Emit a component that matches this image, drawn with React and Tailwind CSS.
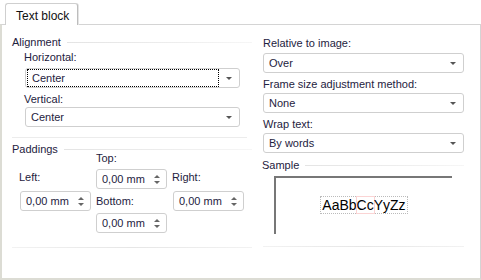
import React from 'react';

const font = { fontFamily: '"Liberation Sans", Arial, sans-serif' };

function Label({ children, className = '' }) {
  return <div className={`h-[14px] leading-[14px] text-[11px] text-[#1e2240] whitespace-nowrap ${className}`}>{children}</div>;
}

function GroupTitle({ title, className = '' }) {
  return (
    <div className={`flex items-center gap-[6px] ${className}`}>
      <Label>{title}</Label>
      <div className="flex-1 h-px bg-gradient-to-r from-[#e4e4e4] via-[#ececec] to-[#f6f6f6]" />
    </div>
  );
}

function Select({ value, focused, className = '' }) {
  return (
    <div className={`h-[20px] border border-[#cfcfcf] rounded-[3px] bg-white flex items-center ${className}`}>
      <div className={`flex-1 h-[18px] flex items-center pl-[4px] text-[11px] text-[#1e2240] ${focused ? 'border border-dotted border-black ml-px' : 'pl-[5px]'}`}>
        {value}
      </div>
      <div className="w-[20px] flex justify-center">
        <div className="w-0 h-0 border-l-[3px] border-r-[3px] border-t-[3px] border-l-transparent border-r-transparent border-t-[#555]" />
      </div>
    </div>
  );
}

function Spin({ value, className = '' }) {
  return (
    <div className={`w-[71px] h-[20px] border border-[#cfcfcf] rounded-[3px] bg-white flex items-center ${className}`}>
      <div className="flex-1 pl-[5px] text-[11px] text-[#1e2240] whitespace-nowrap">{value}</div>
      <div className="w-[18px] flex flex-col items-center gap-[3px]">
        <div className="w-0 h-0 border-l-[3px] border-r-[3px] border-b-[3px] border-l-transparent border-r-transparent border-b-[#666]" />
        <div className="w-0 h-0 border-l-[3px] border-r-[3px] border-t-[3px] border-l-transparent border-r-transparent border-t-[#666]" />
      </div>
    </div>
  );
}

export default function App() {
  return (
    <div className="w-[481px] h-[280px] bg-white flex flex-col" style={font}>
      {/* Tab strip */}
      <div className="h-[24px] flex items-end pl-[5px] relative">
        <div className="w-[73px] h-[22px] border border-b-0 border-[#cfcfcf] border-r-[#bdbdbd] rounded-t-[3px] bg-white text-[12px] text-[#111] pl-[10px] pt-[3px] relative z-10 -mb-px shadow-[1px_0_0_#e4e4e4]">
          Text block
        </div>
      </div>

      {/* Panel */}
      <div className="flex-1 border border-[#d4d4d4] border-l-[2px] border-l-[#dcdcd4] border-b-[2px] border-b-[#dcdcd4] flex">
        {/* Left column */}
        <div className="w-[250px] pl-[10px] flex flex-col">
          <GroupTitle title="Alignment" className="mt-[10px]" />
          <Label className="mt-px ml-[12px]">Horizontal:</Label>
          <Select value="Center" focused className="mt-[4px] ml-[13px] w-[215px]" />
          <Label className="mt-[4px] ml-[12px]">Vertical:</Label>
          <Select value="Center" className="mt-px ml-[13px] w-[215px]" />
          <div className="mt-[10px] mr-[5px] h-px bg-[#ececec]" />
          <GroupTitle title="Paddings" className="mt-[4px]" />
          <div className="flex mt-[-5px]">
            <div className="flex flex-col ml-[8px] pt-[19px] w-[76px]">
              <Label className="ml-[-1px]">Left:</Label>
              <Spin value="0,00 mm" className="mt-[7px]" />
            </div>
            <div className="flex flex-col">
              <Label>Top:</Label>
              <Spin value="0,00 mm" className="mt-[4px]" />
              <Label className="mt-[5px]">Bottom:</Label>
              <Spin value="0,00 mm" className="mt-[5px]" />
            </div>
            <div className="flex flex-col ml-[5px] pt-[19px]">
              <Label>Right:</Label>
              <Spin value="0,00 mm" className="mt-[7px] ml-px" />
            </div>
          </div>
          <div className="mt-[14px] h-px bg-gradient-to-r from-[#f2f2f2] via-[#e6e6e6] to-[#f2f2f2]" />
        </div>

        {/* Right column */}
        <div className="w-[201px] ml-[11px] flex flex-col">
          <Label className="mt-[11px]">Relative to image:</Label>
          <Select value="Over" className="mt-[3px]" />
          <Label className="mt-[4px]">Frame size adjustment method:</Label>
          <Select value="None" className="mt-[2px]" />
          <Label className="mt-[4px]">Wrap text:</Label>
          <Select value="By words" className="mt-[2px]" />
          <GroupTitle title="Sample" className="mt-[5px] -ml-px" />
          <div className="mt-[4px] ml-[11px] w-[178px] h-[58px] border-t-[2px] border-l-[2px] border-[#777] flex justify-center items-start pt-[18px]">
            <span className="border border-dotted border-[#bbb] text-[14px] leading-[16px] text-black px-px">
              AaBb<span className="border border-[#fbd4d4] -mx-px">Cc</span>YyZz
            </span>
          </div>
          <div className="mt-[12px] h-px bg-gradient-to-r from-[#f2f2f2] via-[#e6e6e6] to-[#f2f2f2]" />
        </div>
      </div>
    </div>
  );
}
